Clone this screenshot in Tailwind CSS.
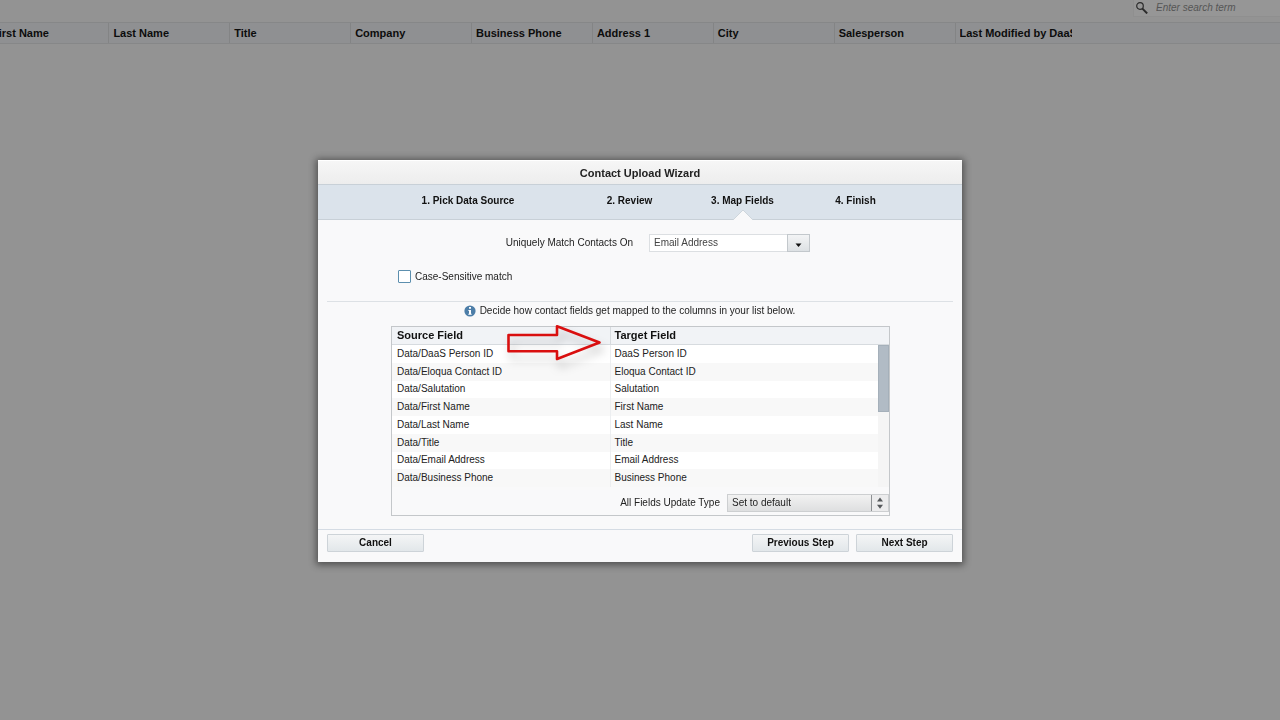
<!DOCTYPE html>
<html lang="en">
<head>
<meta charset="UTF-8" />
<meta name="viewport" content="width=device-width, initial-scale=1.0"/>
<title>Contact Upload Wizard</title>
<script src="https://cdn.jsdelivr.net/npm/@tailwindcss/browser@4"></script>
</head>
<body class="bg-[#939393] min-h-screen overflow-hidden font-['Liberation_Sans',sans-serif] text-[10px] leading-3 text-[#222]">

  <!-- contact list behind the wizard -->
  <header class="flex justify-end h-[22px]">
    <label for="search" class="flex items-center gap-2 w-[147px] h-[17px] pl-0.5 bg-[#969696] border-l border-b border-[#8f8f8f]">
      <svg class="w-3 h-3 shrink-0" viewBox="0 0 12 12" fill="none" stroke="#2b2b2b">
        <circle cx="4" cy="4" r="3.3" stroke-width="1.2"/>
        <path d="M6.4 6.6 L11.2 11.4" stroke-width="2"/>
      </svg>
      <input id="search" type="text" placeholder="Enter search term" class="w-full min-w-0 italic placeholder:text-[#555] focus:outline-none">
    </label>
  </header>
  <div class="bg-[#8f9092] border-y border-[#868788]">
    <table class="w-[85%] -ml-3 table-fixed text-[11px] leading-5 text-[#0c0c0c] text-left">
      <thead>
        <tr>
          <th class="pl-1 border-r border-[#838485] whitespace-nowrap">First Name</th>
          <th class="pl-1 border-r border-[#838485] whitespace-nowrap">Last Name</th>
          <th class="pl-1 border-r border-[#838485] whitespace-nowrap">Title</th>
          <th class="pl-1 border-r border-[#838485] whitespace-nowrap">Company</th>
          <th class="pl-1 border-r border-[#838485] whitespace-nowrap">Business Phone</th>
          <th class="pl-1 border-r border-[#838485] whitespace-nowrap">Address 1</th>
          <th class="pl-1 border-r border-[#838485] whitespace-nowrap">City</th>
          <th class="pl-1 border-r border-[#838485] whitespace-nowrap">Salesperson</th>
          <th class="pl-1 pr-1"><div class="overflow-hidden whitespace-nowrap">Last Modified by DaaS</div></th>
        </tr>
      </thead>
    </table>
  </div>

  <!-- wizard -->
  <div class="fixed inset-0 flex items-center justify-center pt-0.5">
    <div role="dialog" aria-labelledby="wizardTitle" class="w-[644px] max-w-full bg-[#f9f9fa] shadow-[0_1px_7px_2px_rgba(0,0,0,0.45)]">
      <h1 id="wizardTitle" class="pt-0.5 pb-px text-center text-[11px] leading-5 font-bold border-t border-white bg-linear-to-b from-[#f6f6f6] to-[#ededed]">Contact Upload Wizard</h1>

      <ol class="grid grid-cols-[210fr_113fr_113fr_113fr] h-9 pl-[45px] pr-[50px] border-y border-[#c8d0d7] bg-[#dbe3eb] text-center font-bold leading-8 text-[#111]">
        <li>1. Pick Data Source</li>
        <li>2. Review</li>
        <li class="relative" aria-current="step">3. Map Fields
          <svg class="absolute left-1/2 -translate-x-1/2 -bottom-px w-[22px] h-[11px]" viewBox="0 0 22 11">
            <path d="M1 11 L11 1 L21 11" fill="#f9f9fa" stroke="#ced6dc"/>
          </svg>
        </li>
        <li>4. Finish</li>
      </ol>

      <div class="px-[9px] pt-[14px]">
        <div class="grid grid-cols-[306fr_304fr] gap-4 items-center">
          <label for="matchOn" class="text-right">Uniquely Match Contacts On</label>
          <div class="relative w-[161px]">
            <select id="matchOn" class="block appearance-none w-full h-[18px] pl-1 border border-[#dcdfe2] bg-white text-[#444]">
              <option>Email Address</option>
            </select>
            <span class="absolute right-0 inset-y-0 w-[23px] flex items-center justify-center border border-[#c3c8cc] bg-linear-to-b from-[#f3f4f5] to-[#dde1e4] pointer-events-none">
              <svg class="w-[7px] h-1 mt-1" viewBox="0 0 7 4"><path d="M0.5 0.5 H6.5 L3.5 4 Z" fill="#111"/></svg>
            </span>
          </div>
        </div>

        <div class="flex items-center gap-1 mt-[18px] ml-[71px]">
          <input id="caseSensitive" type="checkbox" class="appearance-none w-[13px] h-[13px] border border-[#5c8fae] rounded-[1px] bg-white checked:bg-[#5c8fae]">
          <label for="caseSensitive">Case-Sensitive match</label>
        </div>

        <p class="flex items-center justify-center gap-1 mt-[18px] pt-[3px] pr-[21px] border-t border-[#dde1e5]">
          <svg class="w-3 h-3" viewBox="0 0 12 12">
            <circle cx="6" cy="6" r="5.6" fill="#4d7ea8"/>
            <path d="M5 2 H7 V3.7 H5 Z M4.4 5 H7 V8.8 H7.7 V9.8 H4.3 V8.8 H5 V6 H4.4 Z" fill="#fff"/>
          </svg>
          Decide how contact fields get mapped to the columns in your list below.
        </p>

        <div class="relative mt-[9px] ml-16 mr-[63px] border border-[#c4c7ca]">
          <table class="w-full table-fixed text-left">
            <thead class="text-[11px] leading-[17px] text-[#111] bg-[#f1f3f6]">
              <tr class="border-b border-[#d7dbdf]">
                <th class="w-[218px] pl-[5px] py-0 border-r border-[#d7dbdf]">Source Field</th>
                <th class="pl-1 py-0">Target Field</th>
              </tr>
            </thead>
          </table>
          <div class="relative">
            <table class="w-full h-[142px] table-fixed text-left">
              <tbody id="fields"></tbody>
            </table>
            <div class="absolute right-0 inset-y-0 w-[11px] bg-[#f5f5f5]">
              <div class="h-[67px] bg-[#b1bbc5] border border-[#a5b0ba]"></div>
            </div>
          </div>
          <div class="flex items-center justify-end gap-[7px] pt-[7px] pb-[3px]">
            <label for="updateType">All Fields Update Type</label>
            <div class="relative w-[162px]">
              <select id="updateType" class="block appearance-none w-full h-[18px] pl-1 border border-[#cdcfd1] bg-linear-to-b from-[#f2f2f2] to-[#dedfe0]">
                <option>Set to default</option>
              </select>
              <span class="absolute right-px inset-y-px w-[17px] flex items-center justify-center border-l border-[#8d9093] bg-[#ececed] pointer-events-none">
                <svg class="w-1.5 h-3" viewBox="0 0 6 12" fill="#55585b"><path d="M0 4.5 L3 0.5 L6 4.5 Z M0 7.8 H6 L3 11.8 Z"/></svg>
              </span>
            </div>
          </div>

          <!-- arrow pointing from source to target -->
          <svg class="absolute left-[114px] -top-[5px] w-[100px] h-11 overflow-visible pointer-events-none drop-shadow-[3px_7px_5px_rgba(0,0,0,0.25)]" viewBox="0 0 100 44">
            <path d="M2.5 13 H51 V4.2 L93.5 20.5 L51 37 V29.2 H2.5 Z" fill="none" stroke="#d90f0f" stroke-width="2.6" stroke-linejoin="round"/>
          </svg>
        </div>
      </div>

      <div class="flex gap-[7px] mt-[13px] px-[9px] pt-1 pb-[10px] border-t border-[#d5dce4]">
        <button class="w-[97px] h-[18px] mr-auto border border-[#cdd3d8] rounded-[1px] bg-linear-to-b from-[#f4f5f6] to-[#e2e7ea] font-bold text-[#111]">Cancel</button>
        <button class="w-[97px] h-[18px] border border-[#cdd3d8] rounded-[1px] bg-linear-to-b from-[#f4f5f6] to-[#e2e7ea] font-bold text-[#111]">Previous Step</button>
        <button class="w-[97px] h-[18px] border border-[#cdd3d8] rounded-[1px] bg-linear-to-b from-[#f4f5f6] to-[#e2e7ea] font-bold text-[#111]">Next Step</button>
      </div>
    </div>
  </div>

  <script>
const fields = [
  "DaaS Person ID", "Eloqua Contact ID", "Salutation", "First Name",
  "Last Name", "Title", "Email Address", "Business Phone"
];

document.getElementById("fields").innerHTML = fields.map(f => `
  <tr class="bg-white even:bg-[#f8f8f8]">
    <td class="w-[218px] pl-[5px] py-0 border-r border-[#eceef0]">Data/${f}</td>
    <td class="pl-1 py-0">${f}</td>
  </tr>`).join("");
  </script>
</body>
</html>
